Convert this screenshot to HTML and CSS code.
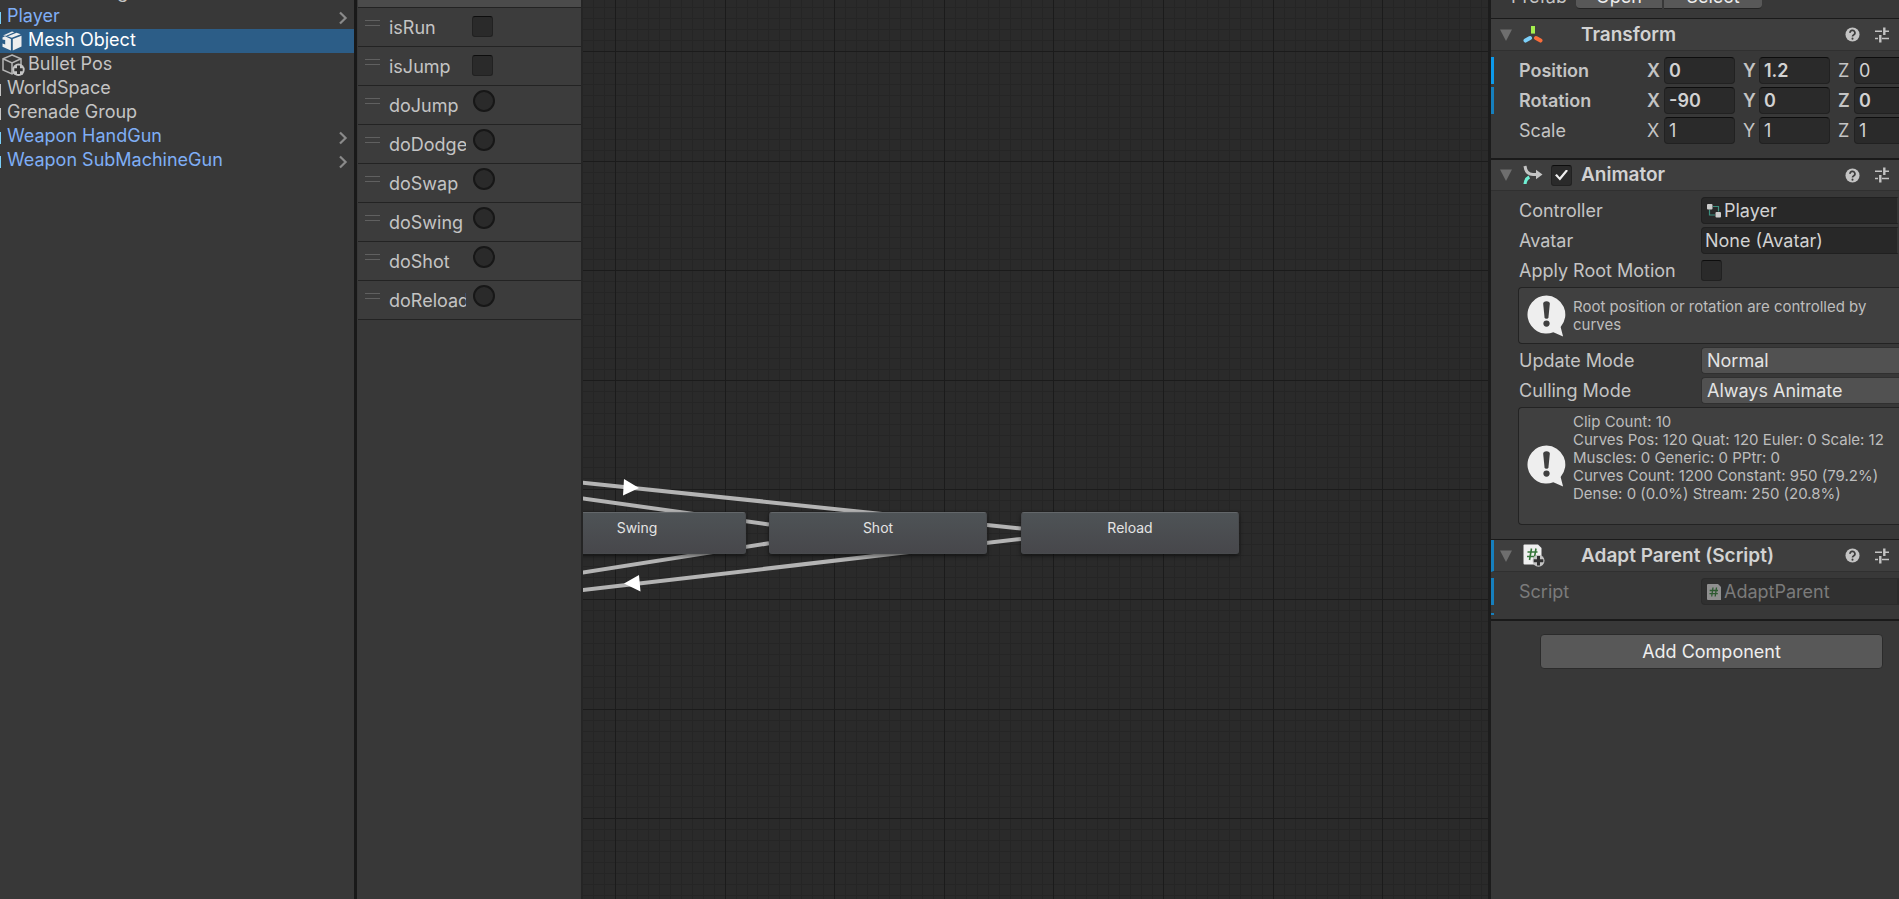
FILE: index.html
```html
<!DOCTYPE html>
<html lang="en">
<head>
  <meta charset="UTF-8" />
  <meta name="viewport" content="width=device-width, initial-scale=1.0"/>
  <title>Animator</title>
  <link rel="stylesheet" href="styles.css">
</head>
<body>
  <svg class="sprite" width="0" height="0" aria-hidden="true">
    <symbol id="chevron" viewBox="0 0 10 14">
      <path d="M2 1.5 L7.6 7 L2 12.5" fill="none" stroke="#8a8a8a" stroke-width="2.2"/>
    </symbol>
    <symbol id="fold" viewBox="0 0 12 12">
      <path d="M0 0.5 H12 L6 12 Z" fill="#6e6e6e"/>
    </symbol>
    <symbol id="help" viewBox="0 0 16 16">
      <circle cx="8" cy="8" r="7.5" fill="#c4c4c4"/>
      <path d="M5.4 6.3 A2.6 2.5 0 1 1 9.4 8.2 C8.4 8.8 8 9.1 8 10.2" fill="none" stroke="#3e3e3e" stroke-width="1.8"/>
      <circle cx="8" cy="12.4" r="1.1" fill="#3e3e3e"/>
    </symbol>
    <symbol id="preset" viewBox="0 0 14 16">
      <path d="M0 4.2 H7 M10 4.2 H14 M0 11.5 H3 M7 11.5 H14" stroke="#c4c4c4" stroke-width="1.4"/>
      <path d="M9.3 0.5 V8 M5.3 8 V15.5" stroke="#c4c4c4" stroke-width="2.4"/>
    </symbol>
    <symbol id="bubble" viewBox="0 0 40 43">
      <path d="M20 0.5 A19.5 19.5 0 1 0 27 38.2 L37 42.5 L34.5 32.8 A19.5 19.5 0 0 0 20 0.5 Z" fill="#eeeeee"/>
      <path d="M16.6 9 Q16.6 6.4 20 6.4 Q23.4 6.4 23.4 9 L22 23 Q21.8 24.4 20 24.4 Q18.2 24.4 18 23 Z" fill="#3f3f3f"/>
      <circle cx="20" cy="29.3" r="3.2" fill="#3f3f3f"/>
    </symbol>
  </svg>

  <main class="editor">
    <nav class="hierarchy" aria-label="Hierarchy">
      <ul>
        <li class="root"><span>Directional Light</span></li>
        <li class="root prefab"><span>Player</span><svg class="chevron"><use href="#chevron"/></svg></li>
        <li class="child selected">
          <svg class="cube" viewBox="0 0 20 20">
            <path d="M0.5 6.5 L3 5.3 L8.9 8 V19.5 L0.5 15.7 V12.5 L3.2 13.4 V9 L0.5 8.5 Z M10.8 8 L19.5 4.7 V15.4 L10.8 19.5 Z M1 4.6 L10 0.6 L12.3 1.2 L4.2 4.7 L9.8 6.8 L18.8 3.2 L14.5 1.7 L6.5 5" fill="#eeeeee"/>
          </svg>
          <span>Mesh Object</span>
        </li>
        <li class="child">
          <svg class="cube" viewBox="0 0 23 22">
            <path d="M10 1 L19 4.8 V15 L10 20 L1 16 V4.8 Z M1 4.8 L10 9 L19 4.8 M10 9 V20" fill="none" stroke="#b4b4b4" stroke-width="1.5"/>
            <circle cx="16.5" cy="15.8" r="6.2" fill="#c4c4c4"/>
            <path d="M16.5 11.5 V20 M12.3 15.8 H20.7" stroke="#303030" stroke-width="3"/>
          </svg>
          <span>Bullet Pos</span>
        </li>
        <li class="root"><span>WorldSpace</span></li>
        <li class="root"><span>Grenade Group</span></li>
        <li class="root prefab"><span>Weapon HandGun</span><svg class="chevron"><use href="#chevron"/></svg></li>
        <li class="root prefab"><span>Weapon SubMachineGun</span><svg class="chevron"><use href="#chevron"/></svg></li>
      </ul>
    </nav>

    <section class="parameters" aria-label="Parameters">
      <div class="parameters-head"></div>
      <div class="param"><i class="grip"></i><label for="p-run">isRun</label><input type="checkbox" id="p-run" class="check"></div>
      <div class="param"><i class="grip"></i><label for="p-isjump">isJump</label><input type="checkbox" id="p-isjump" class="check"></div>
      <div class="param"><i class="grip"></i><label for="p-jump">doJump</label><input type="radio" id="p-jump" class="trigger"></div>
      <div class="param"><i class="grip"></i><label for="p-dodge">doDodge</label><input type="radio" id="p-dodge" class="trigger"></div>
      <div class="param"><i class="grip"></i><label for="p-swap">doSwap</label><input type="radio" id="p-swap" class="trigger"></div>
      <div class="param"><i class="grip"></i><label for="p-swing">doSwing</label><input type="radio" id="p-swing" class="trigger"></div>
      <div class="param"><i class="grip"></i><label for="p-shot">doShot</label><input type="radio" id="p-shot" class="trigger"></div>
      <div class="param"><i class="grip"></i><label for="p-reload">doReload</label><input type="radio" id="p-reload" class="trigger"></div>
    </section>

    <section class="graph" aria-label="State machine">
      <svg class="graph-lines">
        <g id="grid"></g>
        <g stroke="#b4b4b4" stroke-width="4">
          <path d="M-2 482.5 L438 528.5"/>
          <path d="M-2 498.2 L186 524.5"/>
          <path d="M-2 572.8 L186 543.3"/>
          <path d="M-2 590.2 L438 539"/>
        </g>
        <path d="M41 479 L40 495.5 L56 488 Z M56 575 L57.5 591.5 L41 583.5 Z" fill="#ffffff"/>
      </svg>
      <div class="node swing">Swing</div>
      <div class="node shot">Shot</div>
      <div class="node reload">Reload</div>
    </section>

    <aside class="inspector" aria-label="Inspector">
      <div class="prefab-bar">
        <span>Prefab</span>
        <button type="button">Open</button>
        <button type="button">Select</button>
      </div>

      <section class="component transform">
        <header>
          <svg class="fold"><use href="#fold"/></svg>
          <svg class="icon" viewBox="0 0 20 20">
            <path d="M10 1 V8.6" stroke="#a4ee4e" stroke-width="4"/>
            <path d="M7 13 L2.5 15.6" stroke="#7cd0fa" stroke-width="4" stroke-linecap="round"/>
            <path d="M13 13 L17.5 15.6" stroke="#f96d3b" stroke-width="4" stroke-linecap="round"/>
          </svg>
          <h2>Transform</h2>
          <svg class="help"><use href="#help"/></svg>
          <svg class="preset"><use href="#preset"/></svg>
        </header>
        <div class="fields">
          <div class="vector changed">
            <span class="name">Position</span>
            <label for="px">X</label><input id="px" value="0">
            <label for="py">Y</label><input id="py" value="1.2">
            <label for="pz" class="plain">Z</label><input id="pz" class="plain" value="0">
          </div>
          <div class="vector changed dim">
            <span class="name">Rotation</span>
            <label for="rx">X</label><input id="rx" value="-90">
            <label for="ry">Y</label><input id="ry" value="0">
            <label for="rz">Z</label><input id="rz" value="0">
          </div>
          <div class="vector">
            <span class="name">Scale</span>
            <label for="sx">X</label><input id="sx" value="1">
            <label for="sy">Y</label><input id="sy" value="1">
            <label for="sz">Z</label><input id="sz" value="1">
          </div>
        </div>
      </section>

      <section class="component animator">
        <header>
          <svg class="fold"><use href="#fold"/></svg>
          <svg class="icon" viewBox="0 0 20 20">
            <path d="M2 1 C2.5 6 5 9.5 10 9.5 H14" fill="none" stroke="#c4c4c4" stroke-width="3"/>
            <path d="M13 4.8 L19.5 9.5 L13 14.2 Z" fill="#c4c4c4"/>
            <path d="M2 19 C2.2 16 3.5 13.5 6.3 12" fill="none" stroke="#6ff0d4" stroke-width="3.2"/>
          </svg>
          <input type="checkbox" id="animator-on" class="check" checked>
          <h2><label for="animator-on">Animator</label></h2>
          <svg class="help"><use href="#help"/></svg>
          <svg class="preset"><use href="#preset"/></svg>
        </header>
        <div class="fields">
          <div class="row">
            <label for="controller">Controller</label>
            <button type="button" id="controller" class="object">
              <svg viewBox="0 0 14 15">
                <path d="M6 3 H11.5 V8 M2.5 6 V11.5 H8" fill="none" stroke="#3d9181" stroke-width="1.2"/>
                <rect x="0" y="0.5" width="5.5" height="5.5" rx="1" fill="#cccccc"/>
                <rect x="8.5" y="8.5" width="5.5" height="5.5" rx="1" fill="#cccccc"/>
              </svg>
              Player
            </button>
          </div>
          <div class="row">
            <label for="avatar">Avatar</label>
            <button type="button" id="avatar" class="object">None (Avatar)</button>
          </div>
          <div class="row">
            <label for="root-motion">Apply Root Motion</label>
            <input type="checkbox" id="root-motion" class="check">
          </div>
          <div class="notice">
            <svg><use href="#bubble"/></svg>
            <p>Root position or rotation are controlled by<br>curves</p>
          </div>
          <div class="row">
            <label for="update-mode">Update Mode</label>
            <select id="update-mode"><option>Normal</option></select>
          </div>
          <div class="row">
            <label for="culling-mode">Culling Mode</label>
            <select id="culling-mode"><option>Always Animate</option></select>
          </div>
          <div class="notice stats">
            <svg><use href="#bubble"/></svg>
            <p>Clip Count: 10<br>
            Curves Pos: 120 Quat: 120 Euler: 0 Scale: 12<br>
            Muscles: 0 Generic: 0 PPtr: 0<br>
            Curves Count: 1200 Constant: 950 (79.2%)<br>
            Dense: 0 (0.0%) Stream: 250 (20.8%)</p>
          </div>
        </div>
      </section>

      <section class="component script">
        <header>
          <svg class="fold"><use href="#fold"/></svg>
          <svg class="icon script-icon" viewBox="0 0 22 23">
            <path d="M1.5 0.5 H15 L18.5 4 V20.5 H1.5 Q0.5 20.5 0.5 19.5 V1.5 Q0.5 0.5 1.5 0.5 Z" fill="#f0f0f0"/>
            <path d="M8.5 4.5 L6.5 16 M13 4.5 L11 16 M4.5 8 H14.5 M4 12.5 H14" stroke="#36763a" stroke-width="1.6"/>
            <circle cx="15.5" cy="16.8" r="6" fill="#c4c4c4"/>
            <path d="M15.5 12 V21.6 M10.7 16.8 H20.3" stroke="#303030" stroke-width="3"/>
          </svg>
          <h2>Adapt Parent (Script)</h2>
          <svg class="help"><use href="#help"/></svg>
          <svg class="preset"><use href="#preset"/></svg>
        </header>
        <div class="fields">
          <div class="row disabled">
            <label for="script">Script</label>
            <button type="button" id="script" class="object" disabled>
              <svg viewBox="0 0 14 16">
                <path d="M1 0 H11 L14 3 V16 H1 Q0 16 0 15 V1 Q0 0 1 0 Z" fill="#8f8f8f"/>
                <path d="M6 3.5 L4.7 12.5 M9.5 3.5 L8.2 12.5 M2.7 6.5 H11 M2.5 9.7 H10.8" stroke="#2d5a31" stroke-width="1.3"/>
              </svg>
              AdaptParent
            </button>
          </div>
        </div>
      </section>

      <button type="button" class="add">Add Component</button>
    </aside>
  </main>

  <script>
    // small cell is 1/10 of a big one; lines are snapped to whole pixels
    const grid = document.getElementById('grid');
    const cell = 10.96;

    function line(pos, vertical, major) {
      const rect = document.createElementNS('http://www.w3.org/2000/svg', 'rect');
      rect.setAttribute(vertical ? 'x' : 'y', Math.round(pos));
      rect.setAttribute('width', vertical ? 1 : '100%');
      rect.setAttribute('height', vertical ? '100%' : 1);
      rect.setAttribute('fill', major ? '#1b1b1b' : '#252525');
      grid.appendChild(rect);
    }

    for (const major of [false, true]) {
      for (let i = -4; i < 300; i++) {
        if ((i % 10 === 0) !== major) continue;
        line(32 + i * cell, true, major);
        line(51 + i * cell, false, major);
      }
    }
  </script>
</body>
</html>
```

FILE: styles.css
```css
* {
  box-sizing: border-box;
}
body {
  margin: 0;
  font-family: Inter, sans-serif;
  font-size: 18px;
  color: #c4c4c4;
  background: #383838;
}
button, input, select {
  font: inherit;
  color: inherit;
  margin: 0;
}
.sprite {
  position: absolute;
}
.editor {
  display: grid;
  grid-template-columns: 357px 226px 1fr 408px;
  height: 100vh;
  overflow: hidden;
}

/* hierarchy */
.hierarchy {
  border-right: 3px solid #191919;
  overflow: hidden;
}
.hierarchy ul {
  list-style: none;
  margin: -19px 0 0;
  padding: 0;
}
.hierarchy li {
  display: flex;
  align-items: center;
  height: 24px;
  padding: 0 6px 2px 0;
  line-height: 22px;
}
.hierarchy .root::before {
  content: "";
  width: 1px;
  height: 12px;
  margin: 4px 6px 0 0;
  background: #c4c4c4;
}
.hierarchy .prefab {
  color: #7faef5;
}
.hierarchy .prefab::before {
  background: #7bd0f8;
}
.hierarchy .selected {
  background: #2c5d87;
  color: #ffffff;
}
.cube {
  width: 23px;
  height: 22px;
  margin: 2px 3px 0 2px;
}
.selected .cube {
  width: 20px;
  height: 20px;
  margin-right: 6px;
}
.chevron {
  width: 10px;
  height: 14px;
  margin: 4px 0 0 auto;
}

/* parameters */
.parameters {
  border-left: 1px solid #383838;
  border-right: 2px solid #252525;
  overflow: hidden;
}
.parameters-head {
  height: 8px;
  background: #4b4b4b;
  border-bottom: 1px solid #232323;
}
.param {
  display: flex;
  height: 39px;
  padding-left: 7px;
  background: #3c3c3c;
  border-bottom: 1px solid #232323;
}
.grip {
  width: 15px;
  height: 6px;
  margin-top: 12px;
  border: solid #606060;
  border-width: 1px 0;
}
.param label {
  width: 77px;
  margin-left: 9px;
  line-height: 40px;
  overflow: hidden;
}
.check {
  appearance: none;
  flex: none;
  width: 21px;
  height: 21px;
  background: #2a2a2a;
  border: 1px solid #212121;
  border-top-color: #0d0d0d;
  border-radius: 3px;
}
.check:checked::before {
  content: "";
  display: block;
  width: 13px;
  height: 11px;
  margin: 4px 3px;
  background: #eeeeee;
  clip-path: polygon(0 52%, 14% 42%, 36% 70%, 86% 0, 100% 12%, 38% 100%);
}
.param .check {
  margin: 8px 0 0 6px;
}
.trigger {
  appearance: none;
  width: 22px;
  height: 22px;
  margin: 4px 0 0 7px;
  background: #2a2a2a;
  border: 2px solid #171717;
  border-radius: 50%;
}

/* graph */
.graph {
  position: relative;
  overflow: hidden;
  background: #2a2a2a;
  border-right: 3px solid #1c1c1c;
}
.graph-lines {
  display: block;
  width: 100%;
  height: 100%;
}
.node {
  position: absolute;
  top: 512px;
  width: 218px;
  height: 42px;
  padding-top: 5px;
  font-size: 14px;
  line-height: 20px;
  text-align: center;
  color: #e4e4e4;
  background: linear-gradient(#4e5356, #47474b);
  border: 1px solid #484a4d;
  border-top-color: #63676a;
  border-radius: 3px;
  box-shadow: 0 2px 4px rgba(0,0,0,0.5);
}
.swing {
  left: -55px;
}
.shot {
  left: 186px;
}
.reload {
  left: 438px;
}

/* inspector */
.inspector {
  overflow: hidden;
}
.prefab-bar {
  display: flex;
  gap: 2px;
  height: 29px;
  margin-top: -18px;
  padding-left: 20px;
  line-height: 29px;
}
.prefab-bar span {
  width: 63px;
}
.prefab-bar button {
  width: 86px;
  height: 27px;
  padding: 0;
  color: #eeeeee;
  background: #585858;
  border: 0;
  border-bottom: 1px solid #242424;
  border-radius: 0 0 0 4px;
}
.prefab-bar button:last-child {
  width: 98px;
  border-radius: 0 0 4px 0;
}
.component {
  border-top: 1px solid #1a1a1a;
}
.transform {
  margin-top: 7px;
}
.component header {
  display: flex;
  align-items: center;
  height: 32px;
  padding: 0 10px 0 9px;
  background: #3e3e3e;
  border-bottom: 1px solid #303030;
}
.animator {
  border-top-width: 2px;
}
.animator header {
  height: 31px;
}
.fold {
  width: 12px;
  height: 12px;
  margin-right: 11px;
}
.icon {
  width: 20px;
  height: 20px;
}
.component header .check {
  margin-left: 8px;
}
.component h2 {
  margin: 0 auto 0 38px;
  font-size: 19px;
  font-weight: 600;
  line-height: 24px;
  color: #d2d2d2;
}
.animator h2 {
  margin-left: 9px;
}
.script .script-icon {
  width: 22px;
  height: 23px;
}
.script h2 {
  margin-left: 36px;
}
.help {
  width: 15px;
  height: 15px;
  margin-right: 15px;
}
.preset {
  width: 14px;
  height: 16px;
}
.fields {
  display: flex;
  flex-direction: column;
  gap: 3px;
  padding: 6px 0 14px;
}
.vector, .row {
  display: flex;
  align-items: center;
  height: 27px;
  padding-left: 28px;
}
.vector.changed {
  padding-left: 25px;
  border-left: 3px solid #0d9aeb;
  font-weight: 600;
}
.vector.dim {
  border-left-color: #167fbd;
}
.vector .name {
  flex: none;
  width: 128px;
}
.vector label {
  flex: none;
  width: 17px;
}
.vector .plain {
  font-weight: 400;
}
.vector input {
  flex: none;
  width: 71px;
  height: 27px;
  margin-right: 8px;
  padding: 0 4px;
  color: #d2d2d2;
  background: #2a2a2a;
  border: 1px solid #212121;
  border-top-color: #0d0d0d;
  border-radius: 4px;
}
.vector input + label {
  width: 16px;
}
.row label {
  flex: none;
  width: 182px;
}
.object {
  display: flex;
  align-items: center;
  gap: 3px;
  flex: 1;
  height: 27px;
  padding: 0 5px 0 3px;
  color: #d2d2d2;
  background: #282828;
  border: 1px solid #202020;
  border-right: 2px solid #373737;
  border-radius: 4px 0 0 4px;
}
.object svg {
  width: 14px;
  height: 16px;
  margin-left: 2px;
}
.row select {
  appearance: none;
  flex: 1;
  height: 27px;
  padding: 0 5px;
  color: #e4e4e4;
  background: #515151;
  border: 1px solid #303030;
  border-right: 0;
  border-radius: 4px 0 0 4px;
}
.notice {
  display: flex;
  align-items: center;
  gap: 7px;
  height: 57px;
  margin-left: 27px;
  padding-left: 8px;
  font-size: 15px;
  line-height: 18px;
  color: #bdbdbd;
  white-space: nowrap;
  background: #404040;
  border: 1px solid #232323;
  border-right: 0;
  border-radius: 4px 0 0 4px;
}
.notice svg {
  flex: none;
  width: 39px;
  height: 42px;
}
.notice p {
  margin: 0;
}
.stats {
  height: 118px;
}
.stats p {
  align-self: flex-start;
  margin-top: 5px;
}
.script {
  border-bottom: 2px solid #1a1a1a;
}
.script header {
  padding-left: 6px;
  border-left: 3px solid #167fbd;
}
.script .fields {
  padding-bottom: 4px;
}
.script .fields::after {
  content: "";
  width: 3px;
  height: 2px;
  margin-top: 5px;
  background: #167fbd;
}
.script .disabled {
  padding-left: 25px;
  border-left: 3px solid #167fbd;
  color: #7b7b7b;
}
.disabled .object {
  color: #7b7b7b;
  background: #303030;
  border-color: #2b2b2b;
}
.add {
  display: block;
  width: calc(100% - 65px);
  height: 35px;
  margin: 13px 16px 0 49px;
  color: #eeeeee;
  background: #585858;
  border: 1px solid #2b2b2b;
  border-radius: 4px;
}
```
